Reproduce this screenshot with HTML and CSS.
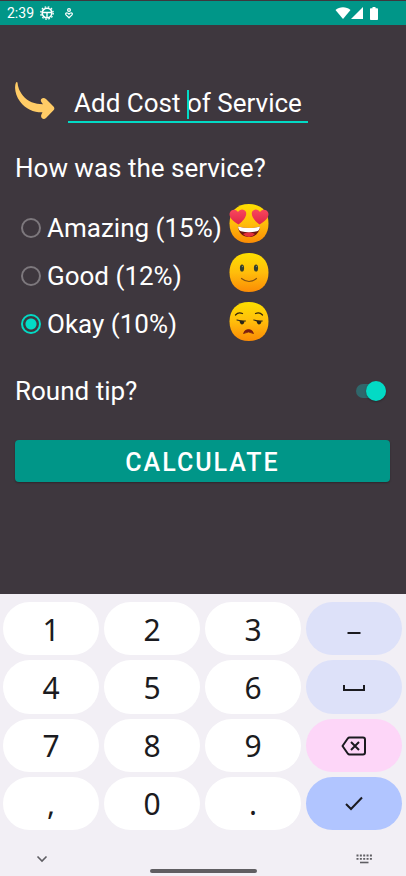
FILE: index.html
```html
<!DOCTYPE html>
<html lang="en">
<head>
<meta charset="utf-8">
<meta name="viewport" content="width=device-width, initial-scale=1">
<title>Tip Calculator</title>
<link rel="stylesheet" href="styles.css">
</head>
<body>
<header class="status">
  <span class="time">2:39</span>
  <svg class="status-gear" width="14" height="14" viewBox="0 0 14 14" aria-hidden="true">
    <circle cx="7" cy="7" r="6.2" fill="none" stroke="#fff" stroke-width="1.4" stroke-dasharray="1.6 1.65"/>
    <circle cx="7" cy="7" r="4.8" fill="none" stroke="#fff" stroke-width="1.6"/>
    <path d="M2.500 6.500h9M7 6.500v5" stroke="#fff" stroke-width="1.400" fill="none"/>
  </svg>
  <svg class="status-heart" width="8" height="11" viewBox="0 0 8 11" aria-hidden="true">
    <circle cx="4" cy="2" r="1.4" fill="none" stroke="#fff" stroke-width="1.200"/>
    <path d="M4 9.800L1 6.900C.2 5.800 1 4.700 2 4.800c1 0 1.500.5 2 1.300.5-.8 1-1.300 2-1.300 1-.1 1.800 1 1 2.100z" fill="none" stroke="#fff" stroke-width="1.200"/>
  </svg>
  <span class="status-right">
    <svg width="16" height="12" viewBox="0 0 16 12" aria-hidden="true"><path d="M8 12L.5 3C4.500-.6 11.500-.6 15.500 3z" fill="#fff"/></svg>
    <svg width="12" height="12" viewBox="0 0 12 12" aria-hidden="true"><path d="M12 0v12H0z" fill="#fff"/></svg>
    <svg class="battery" width="8" height="13" viewBox="0 0 8 13" aria-hidden="true"><path d="M2.500 0h3v1.300H7.200q.8 0 .8.800V12.200q0 .8-.8.800H.8Q0 13 0 12.200V2.100q0-.8.8-.8H2.500z" fill="#fff"/></svg>
  </span>
</header>

<main class="content">
  <div class="cost">
    <svg class="arrow" width="40" height="38" viewBox="0 0 40 38" aria-hidden="true">
      <path d="M1 .5C-1 5 .2 13 5 19.500 11 27.500 19 30.500 27.500 30.300L26.400 32.500C25 36 28.500 38.500 31 36L38.500 28.300Q40.200 26.600 38.500 24.500L31 16.900C28 14.400 24.500 17 26.300 20L28 22.300C20 22.300 12.500 19.500 8 13.800 4.300 9 2.800 5 2.500.5Q1.800-.5 1 .5z" fill="#ffcc66"/>
    </svg>
    <div class="field">
      <input type="text" inputmode="decimal" placeholder="Add Cost of Service" aria-label="Cost of service">
      <span class="caret"></span>
    </div>
  </div>

  <h1 class="question" id="question">How was the service?</h1>

  <div class="service">
    <div class="options" role="radiogroup" aria-labelledby="question">
      <label><input type="radio" name="tip">Amazing (15%)</label>
      <label><input type="radio" name="tip">Good (12%)</label>
      <label><input type="radio" name="tip" checked>Okay (10%)</label>
    </div>
    <div class="faces">
      <svg width="40" height="39" viewBox="0 0 40 39" aria-hidden="true">
        <defs>
          <linearGradient id="skin" x1="0" y1="0" x2="0" y2="1"><stop offset="0" stop-color="#fddf00"/><stop offset=".5" stop-color="#ffbd0b"/><stop offset="1" stop-color="#fb8b05"/></linearGradient>
          <linearGradient id="heart" x1="0" y1="0" x2="0" y2="1"><stop offset="0" stop-color="#f9485c"/><stop offset="1" stop-color="#e02449"/></linearGradient>
        </defs>
        <path d="M20 0C32 0 39.500 7.500 39.500 19.500S32 39 20 39 .5 31.500.5 19.500 8 0 20 0z" fill="url(#skin)"/>
        <path d="M9.500 20.500C3 17-.5 12.500.8 8.700 2 5.500 6.500 4.500 9 8c1.800-3.500 6.500-3.500 8 0 1.200 4-2.500 9-7.500 12.500z" fill="url(#heart)"/>
        <path d="M30.500 20.500C25.500 17 21.800 12 23 8c1.500-3.500 6.200-3.500 8 0 2.500-3.500 7-2.500 8.200.7 1.300 3.800-2.200 8.300-8.700 11.800z" fill="url(#heart)"/>
        <path d="M9 22.500Q20 25.500 31 22.500C30.500 29 26 33 20 33S9.500 29 9 22.500z" fill="#6e160f"/>
        <path d="M14 30q6-3.500 12 0-2.500 3-6 3t-6-3z" fill="#e5303c"/>
        <path d="M9 22.500Q20 25.500 31 22.500 30.500 26.500 28 27.300 20 29 12 27.300 9.500 26.500 9 22.500z" fill="#fff"/>
      </svg>
      <svg width="40" height="39" viewBox="0 0 40 39" aria-hidden="true">
        <path d="M20 0C32 0 39.500 7.500 39.500 19.500S32 39 20 39 .5 31.500.5 19.500 8 0 20 0z" fill="url(#skin)"/>
        <ellipse cx="13" cy="15" rx="2.100" ry="3.600" fill="#353f2b"/><ellipse cx="27" cy="15" rx="2.100" ry="3.600" fill="#353f2b"/>
        <circle cx="13.500" cy="13.500" r=".7" fill="#78866b"/><circle cx="27.500" cy="13.500" r=".7" fill="#78866b"/>
        <path d="M12.500 25.500q7.500 6 15 0" fill="none" stroke="#825112" stroke-width="1.200" stroke-linecap="round"/>
      </svg>
      <svg width="40" height="39" viewBox="0 0 40 39" aria-hidden="true">
        <path d="M20 0C32 0 39.500 7.500 39.500 19.500S32 39 20 39 .5 31.500.5 19.500 8 0 20 0z" fill="url(#skin)"/>
        <path d="M6.500 13q3-3.500 7-1.500M26.500 11.500q4-2 7 1.500" fill="none" stroke="#33260a" stroke-width="1.200" stroke-linecap="round"/>
        <path d="M10.500 18.500l5 .8Q15 22.500 12.800 22.500 10.800 22 10.500 18.500zM27.500 18.500l5 .8Q32 22.500 29.800 22.500 27.800 22 27.500 18.500z" fill="#292418"/>
        <path d="M8 18q4 1.300 8.500 1M24.800 18q4 1.300 8.500 1" fill="none" stroke="#292418" stroke-width="1.100" stroke-linecap="round"/>
        <path d="M14.500 31.500q1-4 5-4t5 4q-5-3-10 0z" fill="#7a1d10" stroke="#7a1d10" stroke-width=".8" stroke-linejoin="round"/>
      </svg>
    </div>
  </div>

  <div class="round">
    <label for="round">Round tip?</label>
    <input class="switch" id="round" type="checkbox" checked>
  </div>

  <button class="calculate" type="button">CALCULATE</button>
</main>

<section class="keyboard" aria-label="Keyboard">
  <div class="keys">
    <button type="button">1</button><button type="button">2</button><button type="button">3</button>
    <button type="button" class="soft" aria-label="Minus"><svg width="26" height="26" viewBox="0 0 26 26"><path d="M6.500 16h13" stroke="#1b1b20" stroke-width="2"/></svg></button>
    <button type="button">4</button><button type="button">5</button><button type="button">6</button>
    <button type="button" class="soft" aria-label="Space"><svg width="26" height="26" viewBox="0 0 26 26"><path d="M3 10v5h20v-5" fill="none" stroke="#1b1b20" stroke-width="2"/></svg></button>
    <button type="button">7</button><button type="button">8</button><button type="button">9</button>
    <button type="button" class="delete" aria-label="Delete"><svg width="26" height="26" viewBox="0 0 26 26"><path d="M8.500 4.500H22q2 0 2 2v13q0 2-2 2H8.500q-1 0-1.600-.8L1.500 13 6.900 5.300Q7.500 4.500 8.500 4.500z" fill="none" stroke="#1b1b20" stroke-width="2" stroke-linejoin="round"/><path d="M10 9l8 8M18 9l-8 8" stroke="#1b1b20" stroke-width="2"/></svg></button>
    <button type="button">,</button><button type="button">0</button><button type="button">.</button>
    <button type="button" class="enter" aria-label="Done"><svg width="26" height="26" viewBox="0 0 26 26"><path d="M5 13l5 5L21 6.500" fill="none" stroke="#1b1b20" stroke-width="2"/></svg></button>
  </div>
  <div class="navbar">
    <button type="button" aria-label="Hide keyboard"><svg width="16" height="12" viewBox="0 0 16 12"><path d="M3.500 3.500L8 8l4.500-4.500" fill="none" stroke="#5f5e63" stroke-width="1.600"/></svg></button>
    <span class="handle"></span>
    <button type="button" aria-label="Switch keyboard"><svg width="16" height="12" viewBox="0 0 16 12"><path d="M.5 2.500h16M.5 5.800h16" stroke="#5f5e63" stroke-width="1.800" stroke-dasharray="2 1.350"/><path d="M4 9.500h8.500" stroke="#5f5e63" stroke-width="1.600"/></svg></button>
  </div>
</section>
</body>
</html>
```

FILE: styles.css
```css
* {
  box-sizing: border-box;
}

body {
  margin: 0;
  min-height: 100vh;
  display: flex;
  flex-direction: column;
  background: #3e373e;
  color: #fff;
  font-family: Roboto, sans-serif;
  font-size: 26px;
  line-height: 32px;
}

button,
input {
  margin: 0;
  padding: 0;
  border: 0;
  font: inherit;
  color: inherit;
}

svg {
  display: block;
}

.status {
  display: flex;
  align-items: center;
  height: 25px;
  padding: 0 28px 0 7px;
  border-top: 1px solid #3e373e;
  background: #009688;
  font-size: 14px;
  line-height: 24px;
}

.status-gear {
  margin-left: 6px;
}

.status-heart {
  margin-left: 11px;
}

.status-right {
  display: flex;
  align-items: center;
  margin-left: auto;
}

.battery {
  margin-left: 7px;
}

.content {
  flex: 1;
  padding: 57px 16px 16px 15px;
}

.cost {
  display: flex;
  gap: 13px;
}

.arrow {
  flex: none;
}

.field {
  position: relative;
  width: 240px;
}

.field input {
  width: 100%;
  height: 41px;
  padding-top: 2px;
  border-bottom: 2px solid #03dac5;
  background: none;
  text-align: center;
  outline: none;
}

.field input::placeholder {
  color: #fff;
  opacity: 1;
}

.caret {
  position: absolute;
  top: 8px;
  left: 50%;
  width: 2px;
  height: 29px;
  margin-left: -1px;
  background: #03dac5;
}

.question {
  margin: 29px 0 0;
  font-size: 26px;
  font-weight: 400;
}

.service {
  display: flex;
  gap: 7px;
  margin-top: 20px;
}

.options {
  display: grid;
  grid-auto-rows: 48px;
  padding-left: 6px;
}

.options label {
  display: flex;
  align-items: center;
  gap: 6px;
}

.options input {
  appearance: none;
  width: 20px;
  height: 20px;
  border: 2px solid #7d787d;
  border-radius: 50%;
}

.options input:checked {
  border-color: #03dac5;
  background: radial-gradient(circle, #03dac5 5px, transparent 6px);
}

.faces {
  display: grid;
  gap: 10px;
  align-content: start;
}

.round {
  display: flex;
  align-items: center;
  justify-content: space-between;
  margin-top: 27px;
}

.switch {
  position: relative;
  appearance: none;
  width: 30px;
  height: 14px;
  margin-right: 4px;
  border-radius: 7px;
  background: #2f676b;
}

.switch::before {
  content: "";
  position: absolute;
  top: -3px;
  right: 0;
  width: 20px;
  height: 20px;
  border-radius: 50%;
  background: #03dac5;
  box-shadow: 0 1px 2px rgba(0, 0, 0, 0.3);
}

.calculate {
  display: block;
  width: 100%;
  height: 42px;
  margin-top: 33px;
  padding-top: 3px;
  border-radius: 4px;
  background: #009688;
  box-shadow: 0 1px 2px rgba(0, 0, 0, 0.3);
  font-size: 25px;
  font-weight: 500;
  letter-spacing: 2px;
}

.keyboard {
  padding: 8px 4px 3px 3px;
  background: #f2eff5;
}

.keys {
  display: grid;
  grid-template-columns: repeat(4, 1fr);
  grid-template-rows: repeat(4, 1fr);
  gap: 5px;
  height: 228px;
}

.keys button {
  display: flex;
  align-items: center;
  justify-content: center;
  padding-top: 2px;
  border-radius: 27px;
  background: #fff;
  color: #1b1b20;
  font-family: "Noto Sans", sans-serif;
  font-size: 30px;
}

.keys .soft {
  background: #dde1f9;
}

.keys .delete {
  background: #fdd6f8;
}

.keys .enter {
  background: #b1c5ff;
}

.navbar {
  display: flex;
  align-items: center;
  justify-content: space-between;
  height: 43px;
  padding: 15px 30px 0 31px;
}

.navbar button {
  background: none;
}

.handle {
  align-self: flex-end;
  width: 107px;
  height: 4px;
  border-radius: 2px;
  background: #605e62;
}
```
